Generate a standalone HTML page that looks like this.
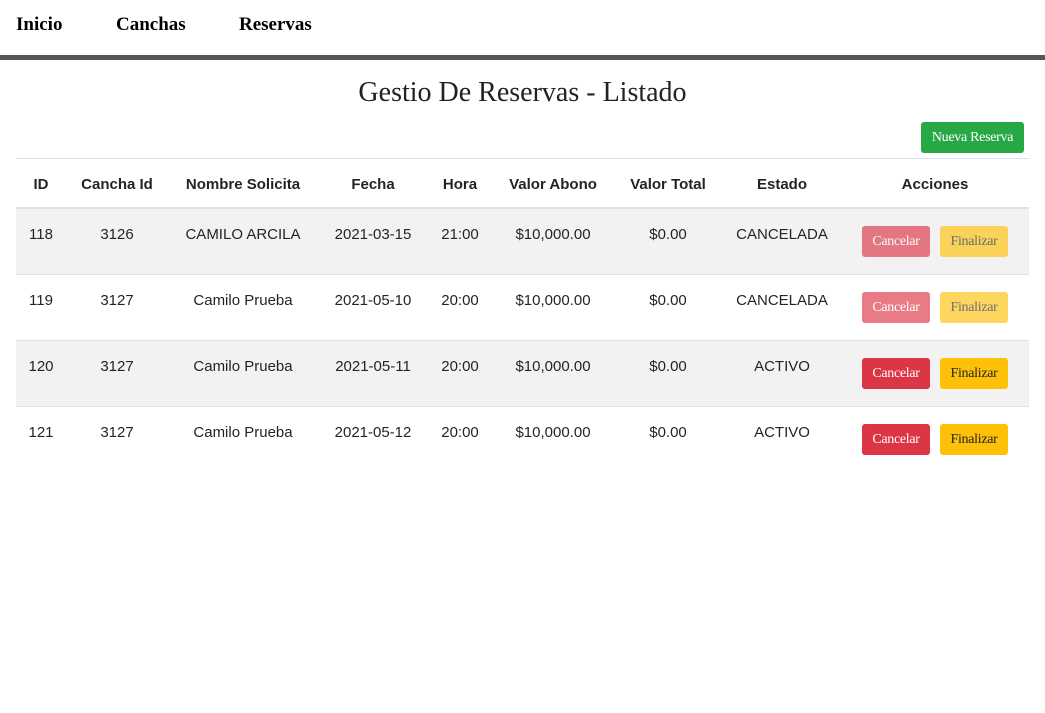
<!DOCTYPE html>
<html><head><meta charset="utf-8"><style>
*{margin:0;padding:0;box-sizing:border-box}
body{width:1045px;height:713px;background:#fff;position:relative;font-family:"Liberation Sans",sans-serif;color:#212529;overflow:hidden}
.nav a{position:absolute;top:14px;font:bold 19px "Liberation Serif",serif;color:#000}
.bar{position:absolute;left:0;top:55px;width:1045px;height:5px;background:#555}
h1{position:absolute;top:77px;left:0;width:1045px;text-align:center;font:normal 28px "Liberation Serif",serif;color:#222}
.btn{position:absolute;height:31px;border-radius:3px;font:14px "Liberation Serif",serif;text-align:center;line-height:31px;letter-spacing:-0.3px}
.new{left:921px;top:122px;width:103px;background:#28a745;color:#fff}
.line{position:absolute;left:16px;width:1013px;background:#dee2e6}
.row{position:absolute;left:16px;width:1013px;height:66px}
.c{position:absolute;transform:translateX(-50%);white-space:nowrap;font-size:15px}
.h{font-weight:bold}
.can{width:68px;left:862px;background:#dc3545;color:#fff}
.fin{width:68px;left:940px;background:#ffc107;color:#212529}
.dis{opacity:.65}
</style></head><body>
<div class="nav"><a style="left:16px">Inicio</a><a style="left:116px">Canchas</a><a style="left:239px">Reservas</a></div>
<div class="bar"></div>
<h1>Gestio De Reservas - Listado</h1>
<div class="btn new">Nueva Reserva</div>
<div class="line" style="top:158px;height:1px"></div>
<div class="line" style="top:207px;height:2px"></div>
<div class="row" style="top:209px;background:#f2f2f2"></div>
<div class="line" style="top:274px;height:1px"></div>
<div class="line" style="top:340px;height:1px"></div>
<div class="row" style="top:341px;height:65px;background:#f2f2f2"></div>
<div class="line" style="top:406px;height:1px"></div>
<div id="t"></div>
<script>
var cols=[41,117,243,373,460,553,668,782];
var hd=["ID","Cancha Id","Nombre Solicita","Fecha","Hora","Valor Abono","Valor Total","Estado"];
var rows=[["118","3126","CAMILO ARCILA","2021-03-15","21:00","$10,000.00","$0.00","CANCELADA"],
["119","3127","Camilo Prueba","2021-05-10","20:00","$10,000.00","$0.00","CANCELADA"],
["120","3127","Camilo Prueba","2021-05-11","20:00","$10,000.00","$0.00","ACTIVO"],
["121","3127","Camilo Prueba","2021-05-12","20:00","$10,000.00","$0.00","ACTIVO"]];
var h="";
hd.forEach(function(t,i){h+='<div class="c h" style="left:'+cols[i]+'px;top:176px">'+t+'</div>';});
h+='<div class="c h" style="left:935px;top:176px">Acciones</div>';
rows.forEach(function(r,j){var y=226+66*j;
r.forEach(function(t,i){h+='<div class="c" style="left:'+cols[i]+'px;top:'+y+'px">'+t+'</div>';});
var d=j<2?' dis':'';var by=226+66*j;
h+='<div class="btn can'+d+'" style="top:'+by+'px">Cancelar</div><div class="btn fin'+d+'" style="top:'+by+'px">Finalizar</div>';});
document.getElementById("t").innerHTML=h;
</script>
</body></html>
